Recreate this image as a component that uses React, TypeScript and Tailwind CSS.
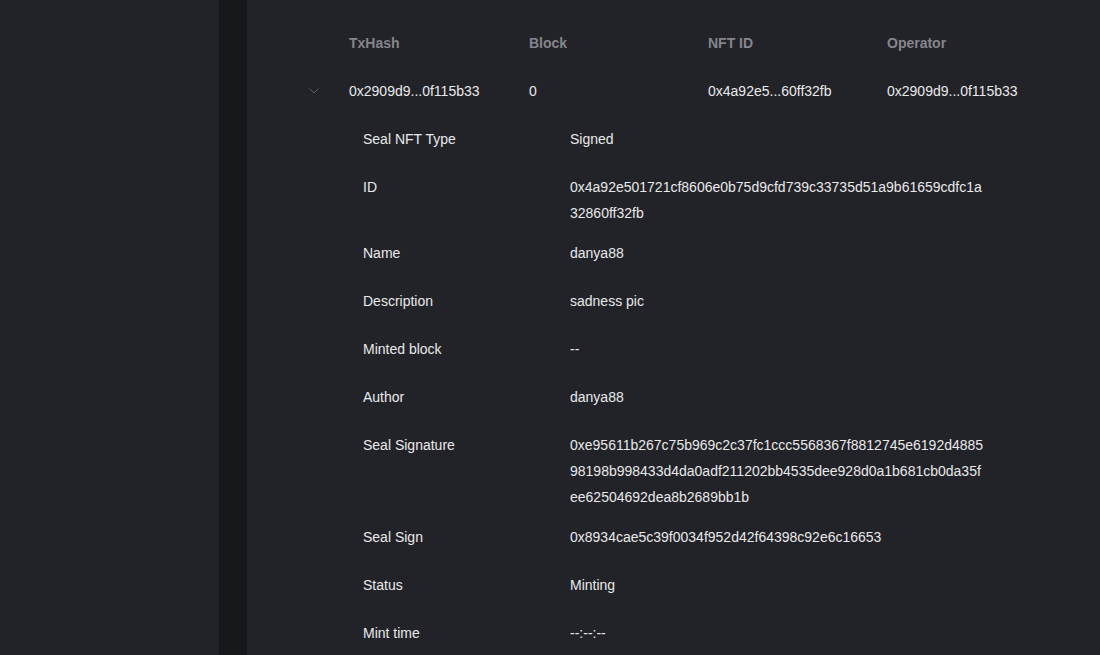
import React from "react";

const columns = ["TxHash", "Block", "NFT ID", "Operator"];
const row = ["0x2909d9...0f115b33", "0", "0x4a92e5...60ff32fb", "0x2909d9...0f115b33"];
const widths = ["w-[180px]", "w-[179px]", "w-[179px]", "w-[179px]"];

const details: [string, string][] = [
  ["Seal NFT Type", "Signed"],
  ["ID", "0x4a92e501721cf8606e0b75d9cfd739c33735d51a9b61659cdfc1a32860ff32fb"],
  ["Name", "danya88"],
  ["Description", "sadness pic"],
  ["Minted block", "--"],
  ["Author", "danya88"],
  [
    "Seal Signature",
    "0xe95611b267c75b969c2c37fc1ccc5568367f8812745e6192d488598198b998433d4da0adf211202bb4535dee928d0a1b681cb0da35fee62504692dea8b2689bb1b",
  ],
  ["Seal Sign", "0x8934cae5c39f0034f952d42f64398c92e6c16653"],
  ["Status", "Minting"],
  ["Mint time", "--:--:--"],
];

export default function App() {
  return (
    <div
      className="flex h-[655px] w-[1100px] overflow-hidden bg-[#222328] text-[14px] text-[#e9e9ea]"
      style={{ fontFamily: '"Liberation Sans", Arial, sans-serif' }}
    >
      {/* Sidebar */}
      <aside className="w-[219px] shrink-0 bg-[#222328]" />
      <div className="w-[28px] shrink-0 bg-[#17181b]" />

      {/* Main */}
      <main className="flex-1 pl-[54px]">
        {/* Table header */}
        <div className="flex h-[66px] items-end pb-[12px] font-semibold text-[#85868b] leading-[22px]">
          <div className="w-[48px]" />
          {columns.map((c, i) => (
            <div key={c} className={widths[i]}>
              {c}
            </div>
          ))}
        </div>

        {/* Data row */}
        <div className="flex h-[49px] items-center leading-[22px]">
          <div className="w-[48px] pl-[8px]">
            <svg width="10" height="6" viewBox="0 0 10 6" fill="none" className="text-[#5c5d62]">
              <path d="M0.5 0.5L5 5L9.5 0.5" stroke="currentColor" strokeWidth="1" />
            </svg>
          </div>
          {row.map((v, i) => (
            <div key={i} className={widths[i]}>
              {v}
            </div>
          ))}
        </div>

        {/* Expanded details */}
        <div className="pl-[62px]">
          {details.map(([label, value]) => (
            <div key={label} className="flex min-h-[48px] pt-[11px] pb-[3px] leading-[26px]">
              <div className="w-[207px] shrink-0">{label}</div>
              <div className="w-[416px] break-all">{value}</div>
            </div>
          ))}
        </div>
      </main>
    </div>
  );
}
